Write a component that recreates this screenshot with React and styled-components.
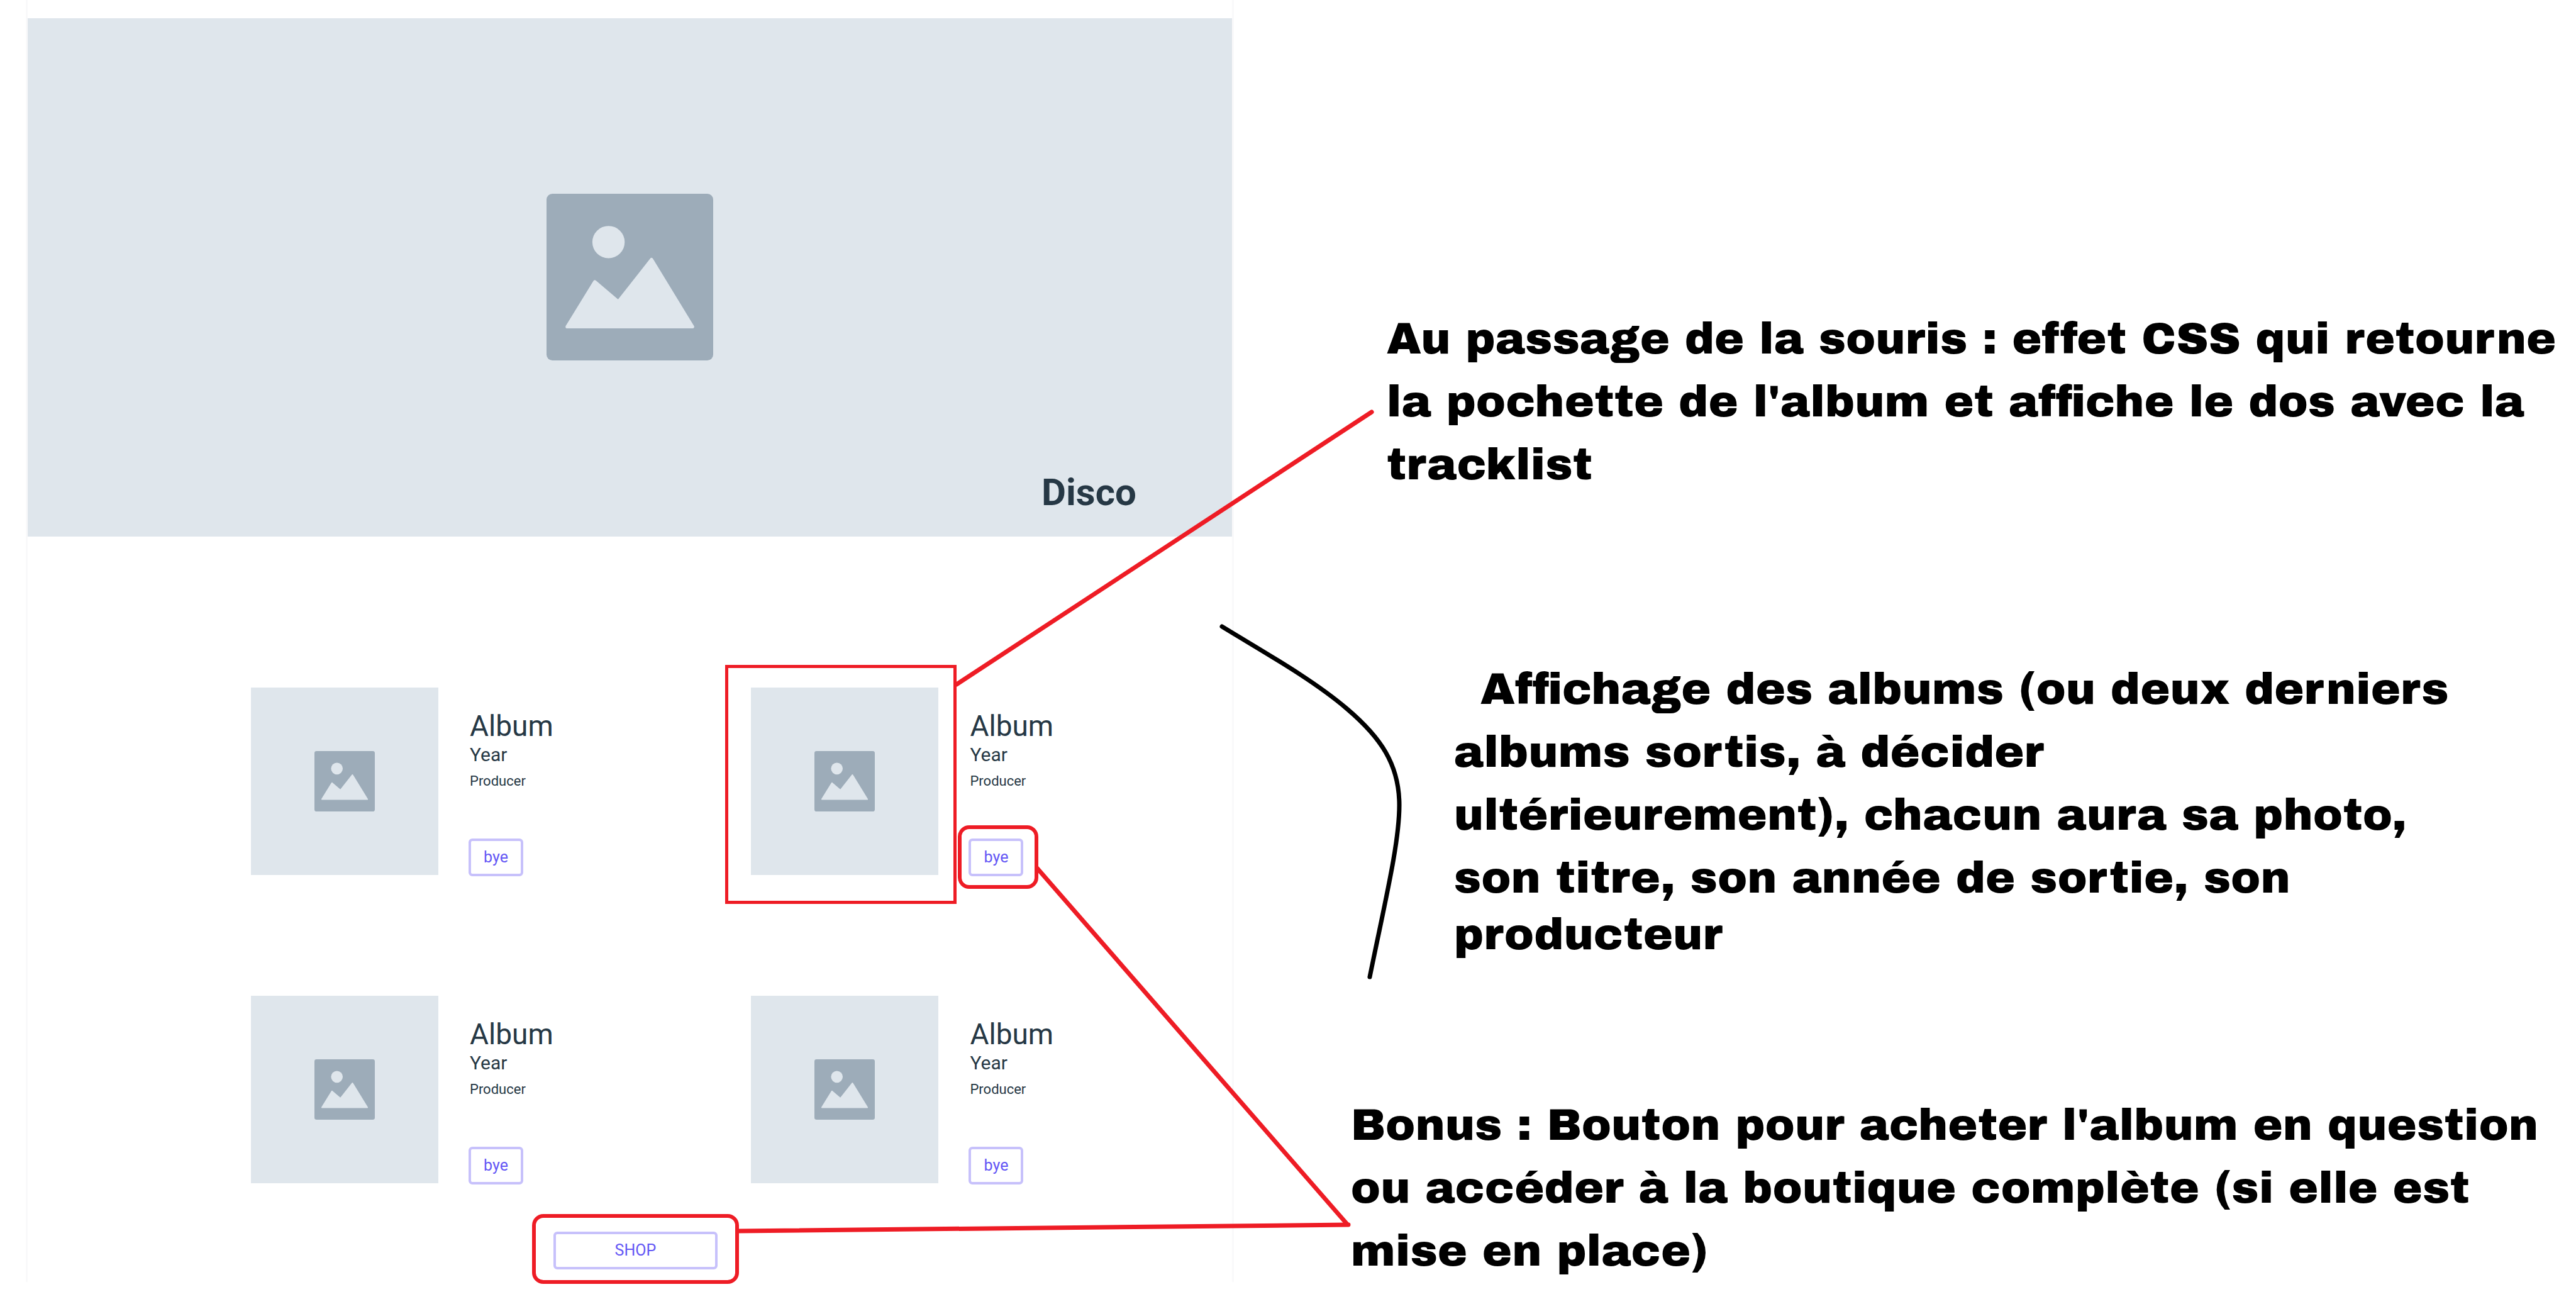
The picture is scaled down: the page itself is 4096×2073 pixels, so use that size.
import React from "react";
import styled, { createGlobalStyle } from "styled-components";

const GlobalStyle = createGlobalStyle`
  *, *::before, *::after { box-sizing: border-box; }
  body { margin: 0; background: #ffffff; color: #263845; font-family: Roboto, "Liberation Sans", sans-serif; }
  h1, h2, p { margin: 0; font-weight: 400; }
`;

const red = "#ee1c25";
const placeholder = "#dfe6ec";

const Page = styled.div`
  position: relative;
  display: grid;
  grid-template-columns: minmax(0, 9fr) minmax(0, 10fr);
  padding-left: 41px;
  min-height: 100vh;
`;

const Mockup = styled.main`
  display: flex;
  flex-direction: column;
  align-self: start;
  padding: 29px 0 20px;
  border: solid #f9f9fa;
  border-width: 0 3px;
`;

const Hero = styled.header`
  position: relative;
  display: flex;
  align-items: center;
  justify-content: center;
  height: 824px;
  padding-bottom: 2px;
  background: ${placeholder};
`;

const HeroTitle = styled.h1`
  position: absolute;
  right: 152px;
  bottom: 34px;
  font-size: 60px;
  line-height: 72px;
  font-weight: 700;
`;

const Picture = styled.svg`
  display: block;
  width: ${(p) => p.$size}px;
  height: ${(p) => p.$size}px;
`;

const Albums = styled.section`
  display: grid;
  grid-template-columns: 51% 1fr;
  row-gap: 192px;
  margin: 240px 0 0 355px;
`;

const AlbumCard = styled.article`
  display: flex;
  gap: 50px;
`;

const Cover = styled.div`
  position: relative;
  display: flex;
  flex: none;
  align-items: center;
  justify-content: center;
  width: 298px;
  height: 298px;
  background: ${placeholder};
`;

const CoverFrame = styled.span`
  position: absolute;
  inset: -36px -29px -46px -41px;
  border: 5px solid ${red};
`;

const Details = styled.div`
  display: flex;
  flex-direction: column;
  align-items: flex-start;
  padding-top: 33px;
`;

const AlbumTitle = styled.h2`
  font-size: 46px;
  line-height: 56px;
`;

const Year = styled.p`
  font-size: 30px;
  line-height: 36px;
`;

const Producer = styled.p`
  margin-top: 8px;
  font-size: 22px;
  line-height: 32px;
`;

const ButtonSlot = styled.div`
  position: relative;
  display: flex;
  ${(p) => (p.$shop ? "align-self: center; margin: 77px 0 0 18px;" : "margin: auto 0 -2px -2px;")}
`;

const ActionButton = styled.button`
  width: ${(p) => (p.$wide ? 261 : 87)}px;
  height: 60px;
  padding: 0;
  border: 4px solid #c7c1fb;
  border-radius: 6px;
  background: #ffffff;
  color: #6457f5;
  font-family: inherit;
  font-size: 25px;
  line-height: 30px;
`;

const ButtonFrame = styled.span`
  position: absolute;
  inset: ${(p) => (p.$shop ? "-28px -34px -23px" : "-21px -24px -20px -17px")};
  border: 6px solid ${red};
  border-radius: 18px;
  pointer-events: none;
`;

const Notes = styled.aside`
  display: flex;
  flex-direction: column;
  padding-top: 489px;
  color: #000000;
  font-family: "Arial Black", "Archivo Black", Inter, "Liberation Sans", sans-serif;
`;

const Note = styled.p`
  margin-left: ${(p) => p.$indent}px;
  padding-bottom: ${(p) => p.$after || 0}px;
  font-size: 71px;
  line-height: 100px;
  white-space: nowrap;
`;

const Line = styled.span`
  display: block;
  padding-left: ${(p) => (p.$first ? 42 : 0)}px;
  line-height: ${(p) => (p.$tight ? 80 : 100)}px;
`;

const Connectors = styled.svg`
  position: absolute;
  top: 0;
  left: 0;
  width: 100%;
  height: auto;
  pointer-events: none;
`;

const PictureIcon = ({ size }) => (
  <Picture $size={size} viewBox="0 0 100 100" aria-hidden="true">
    <rect width="100" height="100" rx="3.5" fill="#9dacb9" />
    <circle cx="37.2" cy="29" r="9.7" fill={placeholder} />
    <path
      d="M12.4 79.8 L29 52.8 L43.1 64.8 L63 39.5 L87.6 79.8 Z"
      fill={placeholder}
      stroke={placeholder}
      strokeWidth="2"
      strokeLinejoin="round"
    />
  </Picture>
);

const albums = [
  { id: 1 },
  { id: 2, marked: true },
  { id: 3 },
  { id: 4 },
];

const Album = ({ marked }) => (
  <AlbumCard>
    <Cover>
      <PictureIcon size={96} />
      {marked && <CoverFrame />}
    </Cover>
    <Details>
      <AlbumTitle>Album</AlbumTitle>
      <Year>Year</Year>
      <Producer>Producer</Producer>
      <ButtonSlot>
        <ActionButton type="button">bye</ActionButton>
        {marked && <ButtonFrame />}
      </ButtonSlot>
    </Details>
  </AlbumCard>
);

export default function App() {
  return (
    <Page>
      <GlobalStyle />
      <Mockup>
        <Hero>
          <PictureIcon size={265} />
          <HeroTitle>Disco</HeroTitle>
        </Hero>
        <Albums>
          {albums.map((a) => (
            <Album key={a.id} marked={a.marked} />
          ))}
        </Albums>
        <ButtonSlot $shop>
          <ActionButton type="button" $wide>SHOP</ActionButton>
          <ButtonFrame $shop />
        </ButtonSlot>
      </Mockup>
      <Notes>
        <Note $indent={243} $after={257}>
          <Line>Au passage de la souris : effet CSS qui retourne</Line>
          <Line>la pochette de l'album et affiche le dos avec la</Line>
          <Line>tracklist</Line>
        </Note>
        <Note $indent={350} $after={213}>
          <Line $first>Affichage des albums (ou deux derniers</Line>
          <Line>albums sortis, à décider</Line>
          <Line>ultérieurement), chacun aura sa photo,</Line>
          <Line>son titre, son année de sortie, son</Line>
          <Line $tight>producteur</Line>
        </Note>
        <Note $indent={186}>
          <Line>Bonus : Bouton pour acheter l'album en question</Line>
          <Line>ou accéder à la boutique complète (si elle est</Line>
          <Line>mise en place)</Line>
        </Note>
      </Notes>
      <Connectors viewBox="0 0 4096 2073" fill="none" strokeLinecap="round" aria-hidden="true">
        <path d="M1521 1088 L2181 655" stroke={red} strokeWidth="7" />
        <path d="M1649 1380 L2142 1946" stroke={red} strokeWidth="7" />
        <path d="M1173 1957 L2144 1947" stroke={red} strokeWidth="7" />
        <path
          d="M1943 996 C2010 1037 2087 1080 2142 1127 C2195 1172 2225 1215 2225 1280 C2225 1340 2203 1430 2178 1553"
          stroke="#000000"
          strokeWidth="7"
        />
      </Connectors>
    </Page>
  );
}
